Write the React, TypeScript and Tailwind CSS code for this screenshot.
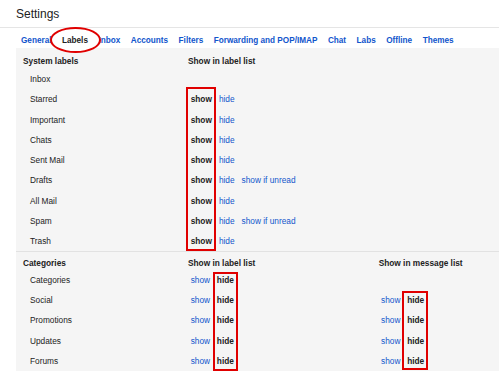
import React from "react";

type Row = { name: string; unread?: boolean; none?: boolean };

const systemRows: Row[] = [
  { name: "Inbox", none: true },
  { name: "Starred" },
  { name: "Important" },
  { name: "Chats" },
  { name: "Sent Mail" },
  { name: "Drafts", unread: true },
  { name: "All Mail" },
  { name: "Spam", unread: true },
  { name: "Trash" },
];

const categoryRows = [
  { name: "Categories", msg: false },
  { name: "Social", msg: true },
  { name: "Promotions", msg: true },
  { name: "Updates", msg: true },
  { name: "Forums", msg: true },
];

const tabs = ["General", "Labels", "Inbox", "Accounts", "Filters", "Forwarding and POP/IMAP", "Chat", "Labs", "Offline", "Themes"];

const link = "text-[#1155cc] cursor-pointer";
const bold = "font-bold text-[#222]";

const App = () => {
  return (
    <div className="w-[499px] h-[374px] overflow-hidden bg-white text-[#222]" style={{ fontFamily: '"Liberation Sans", Arial, sans-serif' }}>
      <div className="h-[28px] border-b border-[#e5e5e5] pl-[16px] pt-[6px] text-[12px] leading-[16px]">Settings</div>

      <div className="flex gap-[10.5px] pl-[21px] pt-[8px] h-[20px] text-[8.2px] leading-[10px] font-bold text-[#1155cc]">
        {tabs.map(t =>
          t === "Labels" ? (
            <span key={t} className="relative z-10 text-[#222]">
              <span className="absolute left-[-12px] right-[-12.7px] top-[-9px] h-[26px] rounded-[50%] border-2 border-[#e00000] bg-white"></span>
              <span className="relative">{t}</span>
            </span>
          ) : (
            <span key={t} className="cursor-pointer">{t}</span>
          )
        )}
      </div>

      <div className="relative ml-[16px] bg-[#f5f5f5] text-[8.3px] leading-[10px]">
        <div className="grid grid-cols-[172px_190px_1fr] h-[21px] pt-[4px] items-center font-bold">
          <div className="pl-[7px]">System labels</div>
          <div>Show in label list</div>
          <div></div>
        </div>
        {systemRows.map(r => (
          <div key={r.name} className="grid grid-cols-[172px_190px_1fr] h-[20.25px] items-center">
            <div className="pl-[14px]">{r.name}</div>
            <div className="flex gap-[7px] pl-[2.7px]">
              {!r.none && (
                <>
                  <span className={bold}>show</span>
                  <span className={link}>hide</span>
                  {r.unread && <span className={link}>show if unread</span>}
                </>
              )}
            </div>
            <div></div>
          </div>
        ))}

        <div className="border-t border-[#e2e2e2] grid grid-cols-[172px_190px_1fr] h-[18.6px] pt-[4px] items-center font-bold">
          <div className="pl-[7px]">Categories</div>
          <div>Show in label list</div>
          <div className="pl-[0.7px]">Show in message list</div>
        </div>
        {categoryRows.map(r => (
          <div key={r.name} className="grid grid-cols-[172px_190px_1fr] h-[20.25px] items-center">
            <div className="pl-[14px]">{r.name}</div>
            <div className="flex gap-[6.8px] pl-[2.7px]">
              <span className={link}>show</span>
              <span className={bold}>hide</span>
            </div>
            <div className="flex gap-[6.8px] pl-[3px]">
              {r.msg && (
                <>
                  <span className={link}>show</span>
                  <span className={bold}>hide</span>
                </>
              )}
            </div>
          </div>
        ))}

        <div className="absolute left-[170px] top-[39px] w-[30px] h-[164px] border-2 border-[#e00000]"></div>
        <div className="absolute left-[196.7px] top-[224px] w-[25.3px] h-[99px] border-2 border-[#e00000]"></div>
        <div className="absolute left-[386px] top-[243px] w-[26px] h-[79px] border-2 border-[#e00000]"></div>
      </div>
    </div>
  );
};

export default App;
